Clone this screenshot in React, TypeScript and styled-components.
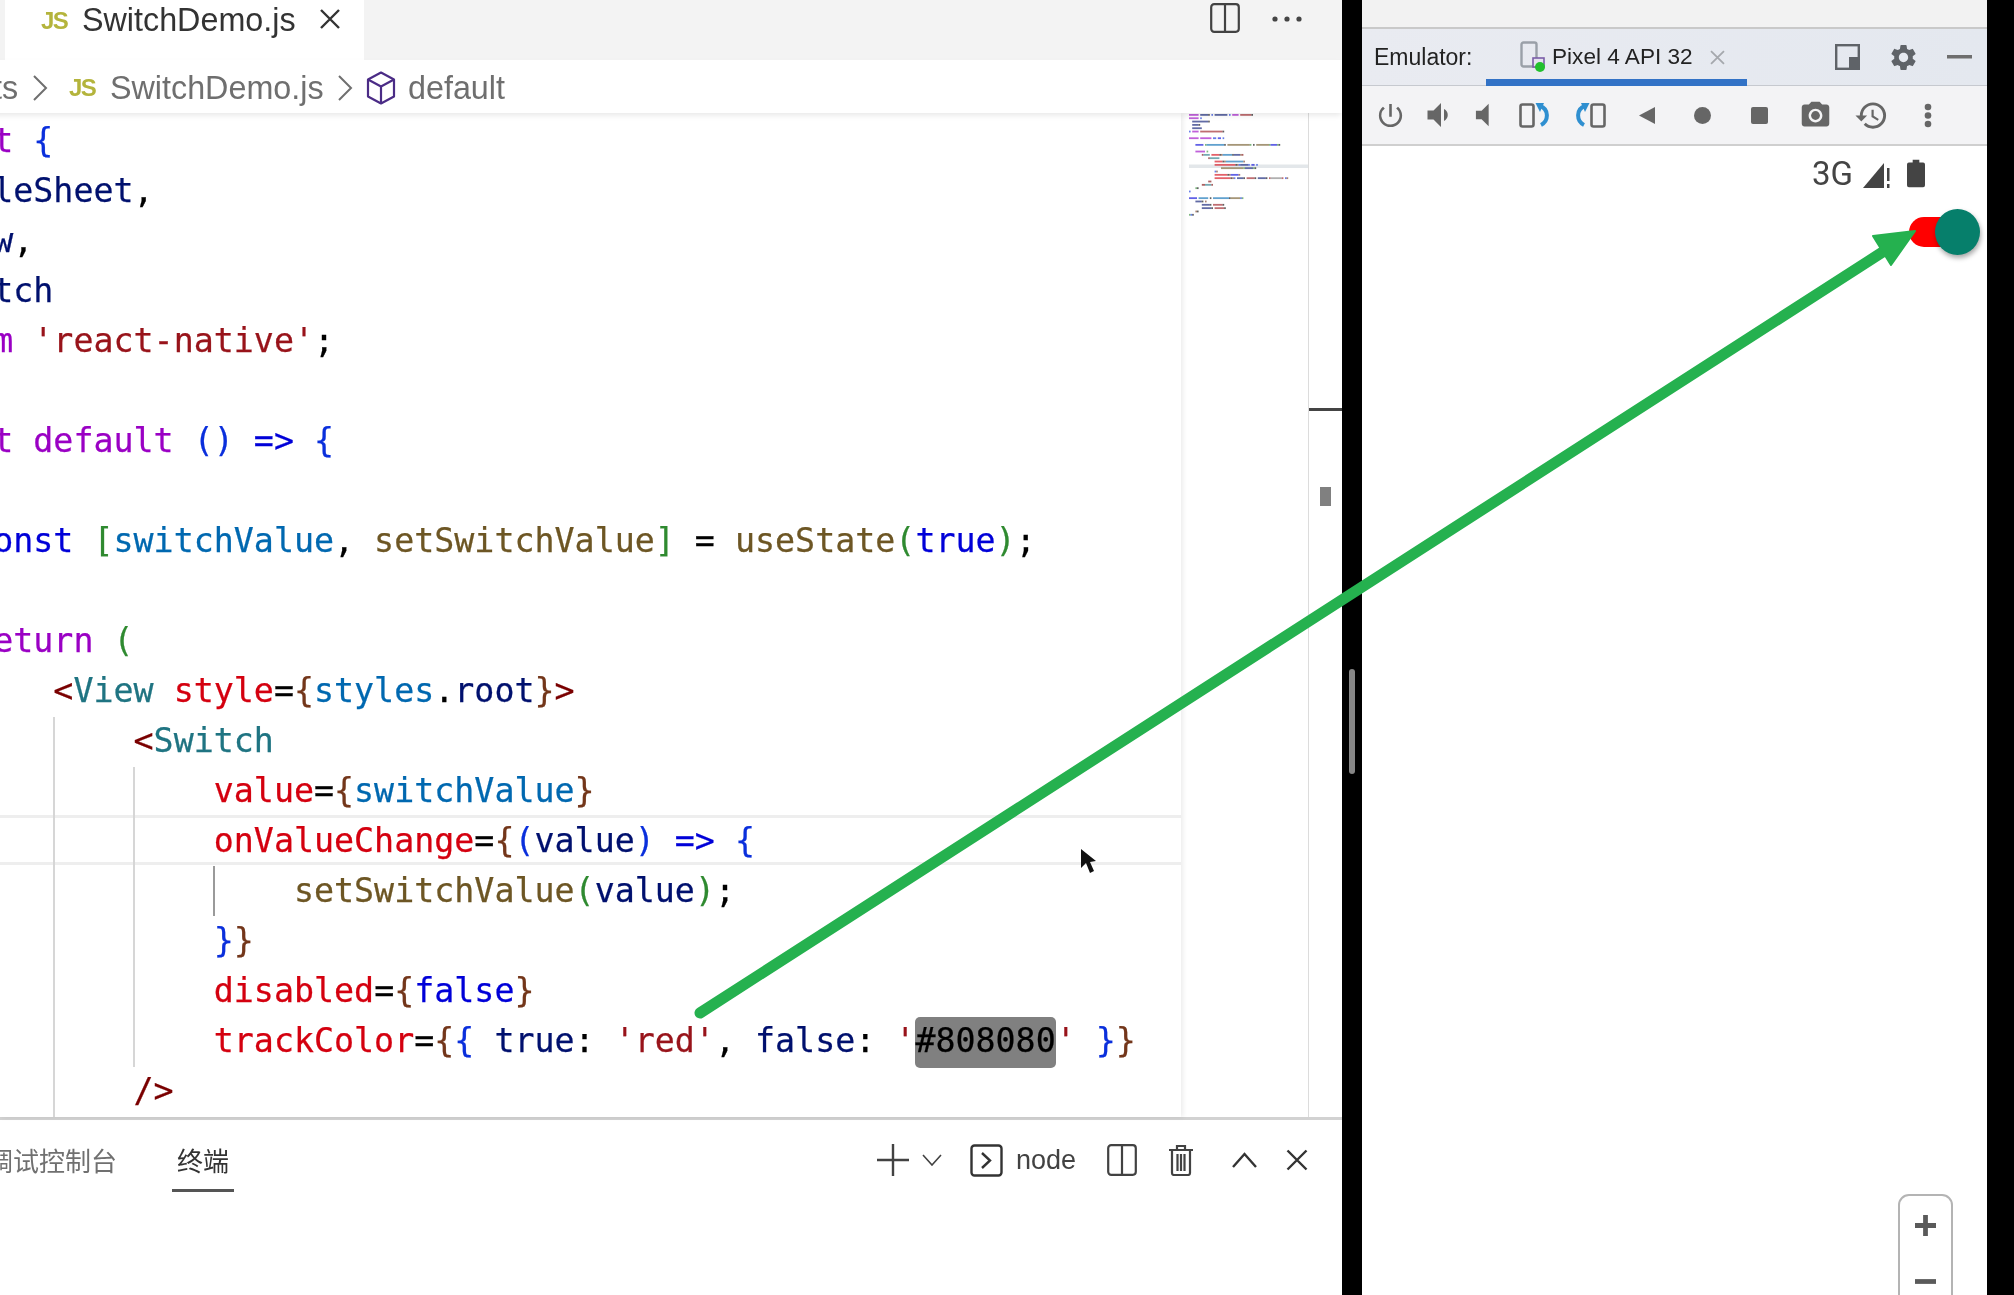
import React from 'react';
import styled, { createGlobalStyle } from 'styled-components';
import { MdPowerSettingsNew, MdVolumeDown, MdVolumeMute, MdPhotoCamera, MdRestore, MdSettings } from 'react-icons/md';

const KW = '#9a00c4', BL = '#0000d8', B1 = '#0a2fdc', B2 = '#2f8a30', B3 = '#73361a', VAR = '#00106e', CON = '#0068b0',
  FN = '#6d5624', STR = '#98131a', TAG = '#7a0000', CMP = '#1f7482', ATTR = '#d4000f', TX = '#000000';

type Tok = [string, string, boolean?];
const lines: Tok[][] = [
  [['import', KW], [' React', VAR], [',', TX], [' {', B1], [' useState ', VAR], ['}', B1], [' from', KW], [" 'react'", STR], [';', TX]],
  [['import', KW], [' {', B1]],
  [['  StyleSheet', VAR], [',', TX]],
  [['  View', VAR], [',', TX]],
  [['  Switch', VAR]],
  [['}', B1], [' from', KW], [" 'react-native'", STR], [';', TX]],
  [],
  [['export', KW], [' default', KW], [' ()', B1], [' =>', BL], [' {', B1]],
  [],
  [['    const', BL], [' [', B2], ['switchValue', CON], [',', TX], [' setSwitchValue', FN], [']', B2], [' = ', TX], ['useState', FN], ['(', B2], ['true', BL], [')', B2], [';', TX]],
  [],
  [['    return', KW], [' (', B2]],
  [['        <', TAG], ['View', CMP], [' style', ATTR], ['=', TX], ['{', B3], ['styles', CON], ['.', TX], ['root', VAR], ['}', B3], ['>', TAG]],
  [['            <', TAG], ['Switch', CMP]],
  [['                value', ATTR], ['=', TX], ['{', B3], ['switchValue', CON], ['}', B3]],
  [['                onValueChange', ATTR], ['=', TX], ['{', B3], ['(', B1], ['value', VAR], [')', B1], [' =>', BL], [' {', B1]],
  [['                    setSwitchValue', FN], ['(', B2], ['value', VAR], [')', B2], [';', TX]],
  [['                }', B1], ['}', B3]],
  [['                disabled', ATTR], ['=', TX], ['{', B3], ['false', BL], ['}', B3]],
  [['                trackColor', ATTR], ['=', TX], ['{', B3], ['{', B1], [' true', VAR], [':', TX], [" 'red'", STR], [',', TX], [' false', VAR], [':', TX], [" '", STR], ['#808080', TX, true], ["'", STR], [' }', B1], ['}', B3]],
  [['            />', TAG]],
  [['        </', TAG], ['View', CMP], ['>', TAG]],
  [['    )', B2], [';', TX]],
  [['}', B1]],
  [],
  [['const', BL], [' styles', CON], [' = ', TX], ['StyleSheet', CON], ['.', TX], ['create', FN], ['(', B1], ['{', B2]],
  [['    root', VAR], [':', TX], [' {', B3]],
  [['        width', VAR], [':', TX], [" '100%'", STR], [',', TX]],
  [['        height', VAR], [':', TX], [" '100%'", STR], [',', TX]],
  [['    }', B3], [',', TX]],
  [['}', B2], [')', B1], [';', TX]],
];

const GlobalStyle = createGlobalStyle`
  html, body { margin: 0; padding: 0; background: #000; overflow: hidden; }
  * { box-sizing: border-box; }
`;

const Page = styled.div`
  position: relative; display: flex; width: 2014px; height: 1295px; overflow: hidden; background: #000;
  font-family: "Liberation Sans", Arial, sans-serif; filter: blur(0.45px);
`;
const LeftPane = styled.div`
  display: flex; flex-direction: column; width: 1342px; height: 100%; background: #fff; overflow: hidden;
`;
const TabBar = styled.div`
  display: flex; flex: none; height: 60px; background: #f3f3f3; padding-left: 5px;
`;
const ActiveTab = styled.div`
  display: flex; align-items: flex-start; width: 359px; height: 60px; background: #fff; padding: 0 0 0 36px;
`;
const JsBadge = styled.span`
  font: bold 24px/41px "Liberation Sans", sans-serif; color: #b4b43c; letter-spacing: -1.5px; width: 41px; flex: none;
`;
const TabTitle = styled.span`
  font-size: 32.3px; line-height: 40px; color: #333; width: 237px; flex: none; white-space: nowrap;
`;
const TabActions = styled.div`
  display: flex; align-items: flex-start; margin-left: auto; padding: 3px 40px 0 0; gap: 32px; height: 40px;
`;
const IconSlot = styled.span<{ $ml?: number }>`
  display: inline-flex; flex: none; margin-left: ${p => p.$ml ?? 0}px;
`;
const Breadcrumbs = styled.div`
  position: relative; z-index: 1; display: flex; align-items: center; flex: none; height: 53px; background: #fff; padding-top: 3px;
  box-shadow: 0 3px 6px -1px rgba(0,0,0,0.10); margin-left: -7px;
  color: #6f6f6f; font-size: 32.3px; white-space: nowrap;
`;
const Crumb = styled.span<{ $w: number }>`
  display: inline-block; width: ${p => p.$w}px; flex: none;
`;
const CrumbJs = styled(JsBadge)`
  line-height: 38px; width: 41px;
`;
const EditorRow = styled.div`
  display: flex; flex: 1; min-height: 0;
`;
const CodeArea = styled.div`
  position: relative; width: 1181px; flex: none; overflow: hidden; padding-top: 3px; box-shadow: 2px 0 5px rgba(0,0,0,0.08);
`;
const CodeLine = styled.div`
  height: 50px; margin-left: -107px; white-space: pre; width: 1400px;
  font: 33.3px/50px "DejaVu Sans Mono", monospace; -webkit-text-stroke: 0.25px currentColor;
`;
const CurrentLine = styled.div<{ $top: number }>`
  position: absolute; left: 0; right: 0; top: ${p => p.$top}px; height: 50px; border-top: 3px solid #eeeeee; border-bottom: 3px solid #eeeeee;
`;
const Guide = styled.div<{ $left: number; $top: number; $h: number; $dark?: boolean }>`
  position: absolute; left: ${p => p.$left}px; top: ${p => p.$top}px; height: ${p => p.$h}px; width: 2px;
  background: ${p => (p.$dark ? '#9a9a9a' : '#d6d6d6')};
`;
const Token = styled.span<{ $c: string; $sel?: boolean }>`
  color: ${p => p.$c};
  ${p => (p.$sel ? 'background: #808080; border-radius: 5px; padding: 4px 0 8px;' : '')}
`;
const Minimap = styled.div`
  width: 127px; flex: none; background: #fff;
`;
const MiniSvg = styled.svg`
  display: block;
`;
const Ruler = styled.div`
  display: flex; flex-direction: column; align-items: center; width: 34px; flex: none; border-left: 1px solid #dcdcdc; background: #fff; padding-top: 295px;
`;
const RulerMark = styled.div`
  width: 100%; height: 3px; background: #444;
`;
const RulerThumb = styled.div`
  width: 11px; height: 19px; margin-top: 76px; background: #808080;
`;
const Panel = styled.div`
  display: flex; flex: none; height: 178px; border-top: 3px solid #d2d2d2; background: #fff; align-items: flex-start; padding-right: 34px;
`;
const PanelTabs = styled.div`
  display: flex; margin: 25px 0 0 -13px; gap: 55px; font-family: "Noto Sans CJK SC", sans-serif; font-size: 26px;
`;
const PanelTab = styled.div<{ $active?: boolean }>`
  height: 47px; line-height: 30px; padding: 0 ${p => (p.$active ? 5 : 0)}px; white-space: nowrap;
  color: ${p => (p.$active ? '#333' : '#707070')};
  border-bottom: 3px solid ${p => (p.$active ? '#555' : 'transparent')};
`;
const PanelActions = styled.div`
  display: flex; align-items: center; margin: 22px 0 0 auto; height: 36px;
`;
const NodeLabel = styled.span`
  font-size: 27px; color: #424242; width: 62px; margin-left: 13px; flex: none; padding-top: 1px;
`;
const DarkGap = styled.div`
  width: 20px; flex: none; height: 100%; background: #000; display: flex; justify-content: center; padding-top: 669px;
`;
const DarkThumb = styled.div`
  width: 6px; height: 105px; border-radius: 3px; background: #868686;
`;
const RightPane = styled.div`
  display: flex; flex-direction: column; width: 625px; flex: none; background: #fff; height: 100%;
`;
const TopStrip = styled.div`
  height: 29px; flex: none; background: #f2f2f2; border-bottom: 2px solid #c9c9c9;
`;
const ToolHeader = styled.div`
  display: flex; align-items: stretch; height: 57px; flex: none; padding: 0 15px 0 12px;
  background: linear-gradient(90deg, #e9ebf1, #e4e8ef); border-bottom: 1px solid #c6c9cf;
  font-size: 23px; color: #222;
`;
const HeaderLabel = styled.span`
  width: 112px; flex: none; line-height: 56px; white-space: nowrap;
`;
const DeviceTab = styled.div`
  display: flex; align-items: center; width: 261px; flex: none; padding: 6px 0 0 34px; border-bottom: 7px solid #3272c6; height: 57px;
`;
const DeviceTitle = styled.span`
  margin-left: 5px; width: 158px; flex: none; font-size: 22.6px; white-space: nowrap;
`;
const HeaderActions = styled.div`
  display: flex; align-items: center; gap: 28px; margin-left: auto;
`;
const Toolbar = styled.div`
  display: flex; align-items: center; height: 60px; flex: none; padding-left: 4px; background: #f3f3f5; border-bottom: 2px solid #cfcfcf;
`;
const ToolButton = styled.div<{ $w: number }>`
  display: flex; align-items: center; justify-content: center; flex: none; width: ${p => p.$w}px; color: #666;
`;
const Device = styled.div`
  position: relative; flex: 1; background: #fff;
`;
const StatusBar = styled.div`
  display: flex; align-items: center; justify-content: flex-end; height: 29px; margin-top: 13px; padding-right: 62px; color: #444;
`;
const StatusText = styled.span`
  font: 400 33px/30px Roboto, sans-serif; margin-right: 10px;
`;
const SwitchRow = styled.div`
  display: flex; justify-content: flex-end; margin-top: 21px; padding-right: 7px;
`;
const SwitchRoot = styled.div`
  position: relative; display: flex; align-items: center; width: 71px; height: 46px;
`;
const Track = styled.div`
  width: 50px; height: 30px; border-radius: 15px; background: #ff0000;
`;
const Thumb = styled.div`
  position: absolute; right: 0; top: 0; width: 45px; height: 46px; border-radius: 50%; background: #067f6b;
  box-shadow: 1px 3px 5px rgba(0,0,0,0.35);
`;
const ZoomControl = styled.div`
  position: absolute; left: 536px; top: 1048px; width: 55px; height: 120px; border: 2px solid #b4b4b4; border-radius: 11px; background: #fff;
  display: flex; flex-direction: column; align-items: center; padding-top: 19px; gap: 43px;
`;
const Overlay = styled.svg`
  position: absolute; left: 0; top: 0; pointer-events: none;
`;

const CodeLines = () => (
  <>
    {lines.slice(1, 21).map((ln, i) => (
      <CodeLine key={i}>
        {ln.length === 0 ? ' ' : ln.map((t, j) => (
          <Token key={j} $c={t[1]} $sel={t[2]}>{t[0]}</Token>
        ))}
      </CodeLine>
    ))}
  </>
);

const MinimapDrawing = () => {
  const cw = 1.6, lh = 3.33;
  const rects: React.ReactNode[] = [];
  lines.forEach((ln, i) => {
    let col = 0;
    ln.forEach((t, j) => {
      const re = /\S+/g;
      let m: RegExpExecArray | null;
      while ((m = re.exec(t[0]))) {
        rects.push(<rect key={`${i}-${j}-${m.index}`} x={8 + (col + m.index) * cw} y={i * lh + 1} width={m[0].length * cw} height={1.8}
          fill={t[2] ? '#808080' : t[1]} opacity={0.62} />);
      }
      col += t[0].length;
    });
  });
  return (
    <MiniSvg width={127} height={1000} viewBox="0 0 127 1000">
      <rect x={8} y={51.5} width={119} height={3.5} fill="#e3e7ea" />
      {rects}
    </MiniSvg>
  );
};

const JsCloseIcon = () => (
  <svg width="22" height="22" viewBox="0 0 22 22" fill="none" stroke="#333" strokeWidth="2.4" style={{ marginTop: 8 }}>
    <path d="M2 2 20 20M20 2 2 20" />
  </svg>
);
const SplitIcon = ({ w = 30, h = 30, c = '#424242' }: { w?: number; h?: number; c?: string }) => (
  <svg width={w} height={h} viewBox={`0 0 ${w} ${h}`} fill="none" stroke={c} strokeWidth="2.2">
    <rect x="1.2" y="1.2" width={w - 2.4} height={h - 2.4} rx="3" />
    <path d={`M${w / 2} 1V${h - 1}`} />
  </svg>
);
const DotsIcon = () => (
  <svg width="30" height="8" viewBox="0 0 30 8" fill="#444" style={{ marginTop: 12 }}>
    <circle cx="3" cy="4" r="2.6" /><circle cx="15" cy="4" r="2.6" /><circle cx="27" cy="4" r="2.6" />
  </svg>
);
const Chevron = () => (
  <svg width="16" height="30" viewBox="0 0 16 30" fill="none" stroke="#6f6f6f" strokeWidth="2"><path d="M2 3 14 15 2 27" /></svg>
);
const CubeIcon = () => (
  <svg width="30" height="34" viewBox="0 0 30 34" fill="none" stroke="#4b2c86" strokeWidth="2.2" strokeLinejoin="round">
    <path d="M15 1.5 28 8.5V25.5L15 32.5 2 25.5V8.5Z" /><path d="M2 8.5 15 15.5 28 8.5M15 15.5V32.5" />
  </svg>
);
const PlusIcon = () => (
  <svg width="32" height="32" viewBox="0 0 32 32" stroke="#424242" strokeWidth="2.4"><path d="M16 0V32M0 16H32" /></svg>
);
const SmallChevron = () => (
  <svg width="20" height="12" viewBox="0 0 20 12" fill="none" stroke="#424242" strokeWidth="1.6"><path d="M1 1 10 11 19 1" /></svg>
);
const TerminalIcon = () => (
  <svg width="33" height="33" viewBox="0 0 33 33" fill="none" stroke="#333" strokeWidth="2.4">
    <rect x="1.5" y="1.5" width="30" height="30" rx="3" /><path d="M12 9 20 16.5 12 24" />
  </svg>
);
const TrashIcon = () => (
  <svg width="26" height="32" viewBox="0 0 26 32" fill="none" stroke="#424242" strokeWidth="2.2">
    <path d="M1 6H25M9 6V2H17V6M4 6V29Q4 31 6 31H20Q22 31 22 29V6M9.500 10V27M13 10V27M16.500 10V27" />
  </svg>
);
const CaretUp = () => (
  <svg width="25" height="16" viewBox="0 0 25 16" fill="none" stroke="#333" strokeWidth="2.4"><path d="M1 15 12.500 2 24 15" /></svg>
);
const CloseIcon = ({ s = 22, c = '#333', w = 2.4 }: { s?: number; c?: string; w?: number }) => (
  <svg width={s} height={s} viewBox="0 0 22 22" fill="none" stroke={c} strokeWidth={w}><path d="M1.500 1.500 20.500 20.500M20.500 1.500 1.500 20.500" /></svg>
);
const DeviceIcon = () => (
  <svg width="27" height="32" viewBox="0 0 27 32" fill="none" style={{ flex: 'none' }}>
    <rect x="1.500" y="1.500" width="15" height="24" rx="2" stroke="#9aa0a8" strokeWidth="2.400" />
    <rect x="13" y="17" width="11" height="9" fill="#e4e2ee" stroke="#7a5ea8" strokeWidth="1.600" />
    <circle cx="20" cy="26" r="5" fill="#22c02e" />
  </svg>
);
const FloatIcon = () => (
  <svg width="25" height="26" viewBox="0 0 25 26" fill="none">
    <rect x="1.200" y="1.200" width="22.600" height="23.600" stroke="#5f6368" strokeWidth="2.400" />
    <rect x="14" y="13" width="10" height="12" fill="#5f6368" />
  </svg>
);
const MinusIcon = () => (
  <svg width="25" height="4" viewBox="0 0 25 4"><rect width="25" height="3.500" fill="#6e6e6e" /></svg>
);
const RotateIcon = ({ flip }: { flip?: boolean }) => (
  <svg width="30" height="25" viewBox="0 0 30 25" fill="none" style={flip ? { transform: 'scaleX(-1)' } : undefined}>
    <rect x="1.500" y="1.500" width="13" height="22" rx="2" stroke="#666" strokeWidth="2.600" />
    <path d="M21 3C30 6 30 18 22 22" stroke="#2f8fd0" strokeWidth="4" />
    <path d="M16 -1 25 0 21 9Z" fill="#2f8fd0" />
  </svg>
);
const BackIcon = () => <svg width="17" height="17" viewBox="0 0 17 17" fill="#666"><path d="M16 0V17L0 8.500Z" /></svg>;
const CircleIcon = () => <svg width="17" height="17" viewBox="0 0 17 17" fill="#666"><circle cx="8.500" cy="8.500" r="8.500" /></svg>;
const StopIcon = () => <svg width="17" height="17" viewBox="0 0 17 17" fill="#666"><rect width="17" height="17" rx="2" /></svg>;
const MoreIcon = () => (
  <svg width="8" height="25" viewBox="0 0 8 25" fill="#666"><circle cx="4" cy="4" r="3.300" /><circle cx="4" cy="12.500" r="3.300" /><circle cx="4" cy="21" r="3.300" /></svg>
);
const SignalIcon = () => (
  <svg width="29" height="28" viewBox="0 0 29 28" fill="#444">
    <path d="M0 28 21 3V28Z" /><rect x="24" y="8" width="2.500" height="13" /><rect x="24" y="24" width="2.500" height="4" />
  </svg>
);
const BatteryIcon = () => (
  <svg width="18" height="29" viewBox="0 0 19 29" fill="#444"><path d="M6 0H13V3H17Q19 3 19 5V27Q19 29 17 29H2Q0 29 0 27V5Q0 3 2 3H6Z" /></svg>
);
const ZoomPlus = () => (
  <svg width="21" height="21" viewBox="0 0 22 22" fill="#5a5a5a"><path d="M8.500 0H13.500V8.500H22V13.500H13.500V22H8.500V13.500H0V8.500H8.500Z" /></svg>
);
const ZoomMinus = () => (
  <svg width="21" height="5" viewBox="0 0 22 5" fill="#5a5a5a"><rect width="22" height="5" /></svg>
);

export default function App() {
  return (
    <Page>
      <GlobalStyle />
      <LeftPane>
        <TabBar>
          <ActiveTab>
            <JsBadge>JS</JsBadge>
            <TabTitle>SwitchDemo.js</TabTitle>
            <JsCloseIcon />
          </ActiveTab>
          <TabActions>
            <SplitIcon />
            <DotsIcon />
          </TabActions>
        </TabBar>
        <Breadcrumbs>
          <Crumb $w={39}>ts</Crumb>
          <Chevron />
          <IconSlot $ml={21}><CrumbJs>JS</CrumbJs></IconSlot>
          <Crumb $w={227}>SwitchDemo.js</Crumb>
          <Chevron />
          <IconSlot $ml={13}><CubeIcon /></IconSlot>
          <IconSlot $ml={12}>default</IconSlot>
        </Breadcrumbs>
        <EditorRow>
          <CodeArea>
            <CurrentLine $top={702} />
            <CodeLines />
            <Guide $left={53} $top={604} $h={400} />
            <Guide $left={133} $top={654} $h={300} />
            <Guide $left={213} $top={753} $h={50} $dark />
          </CodeArea>
          <Minimap><MinimapDrawing /></Minimap>
          <Ruler>
            <RulerMark />
            <RulerThumb />
          </Ruler>
        </EditorRow>
        <Panel>
          <PanelTabs>
            <PanelTab>调试控制台</PanelTab>
            <PanelTab $active>终端</PanelTab>
          </PanelTabs>
          <PanelActions>
            <PlusIcon />
            <IconSlot $ml={13}><SmallChevron /></IconSlot>
            <IconSlot $ml={28}><TerminalIcon /></IconSlot>
            <NodeLabel>node</NodeLabel>
            <IconSlot $ml={29}><SplitIcon w={30} h={32} /></IconSlot>
            <IconSlot $ml={31}><TrashIcon /></IconSlot>
            <IconSlot $ml={38}><CaretUp /></IconSlot>
            <IconSlot $ml={29}><CloseIcon /></IconSlot>
          </PanelActions>
        </Panel>
      </LeftPane>
      <DarkGap><DarkThumb /></DarkGap>
      <RightPane>
        <TopStrip />
        <ToolHeader>
          <HeaderLabel>Emulator:</HeaderLabel>
          <DeviceTab>
            <DeviceIcon />
            <DeviceTitle>Pixel 4 API 32</DeviceTitle>
            <CloseIcon s={15} c="#a5a8ad" w={2.6} />
          </DeviceTab>
          <HeaderActions>
            <FloatIcon />
            <MdSettings size={31} color="#5f6368" />
            <MinusIcon />
          </HeaderActions>
        </ToolHeader>
        <Toolbar>
          <ToolButton $w={48}><MdPowerSettingsNew size={31} /></ToolButton>
          <ToolButton $w={48}><MdVolumeDown size={36} /></ToolButton>
          <ToolButton $w={42}><MdVolumeMute size={34} /></ToolButton>
          <ToolButton $w={60}><RotateIcon /></ToolButton>
          <ToolButton $w={54}><RotateIcon flip /></ToolButton>
          <ToolButton $w={58}><BackIcon /></ToolButton>
          <ToolButton $w={52}><CircleIcon /></ToolButton>
          <ToolButton $w={62}><StopIcon /></ToolButton>
          <ToolButton $w={50}><MdPhotoCamera size={33} /></ToolButton>
          <ToolButton $w={62}><MdRestore size={35} /></ToolButton>
          <ToolButton $w={52}><MoreIcon /></ToolButton>
        </Toolbar>
        <Device>
          <StatusBar>
            <StatusText>3G</StatusText>
            <SignalIcon />
            <IconSlot $ml={15}><BatteryIcon /></IconSlot>
          </StatusBar>
          <SwitchRow>
            <SwitchRoot>
              <Track />
              <Thumb />
            </SwitchRoot>
          </SwitchRow>
          <ZoomControl>
            <ZoomPlus />
            <ZoomMinus />
          </ZoomControl>
        </Device>
      </RightPane>
      <Overlay width={2014} height={1295} viewBox="0 0 2014 1295">
        <path d="M700 1013 1892 246" stroke="#25b14f" strokeWidth="11" strokeLinecap="round" fill="none" />
        <path d="M1915 231 1873 236 1891 265Z" fill="#25b14f" stroke="#25b14f" strokeWidth="2" strokeLinejoin="round" />
        <path d="M1081 849V868L1086 863 1090 873 1094 871 1090 862 1096 861Z" fill="#111" />
      </Overlay>
    </Page>
  );
}
